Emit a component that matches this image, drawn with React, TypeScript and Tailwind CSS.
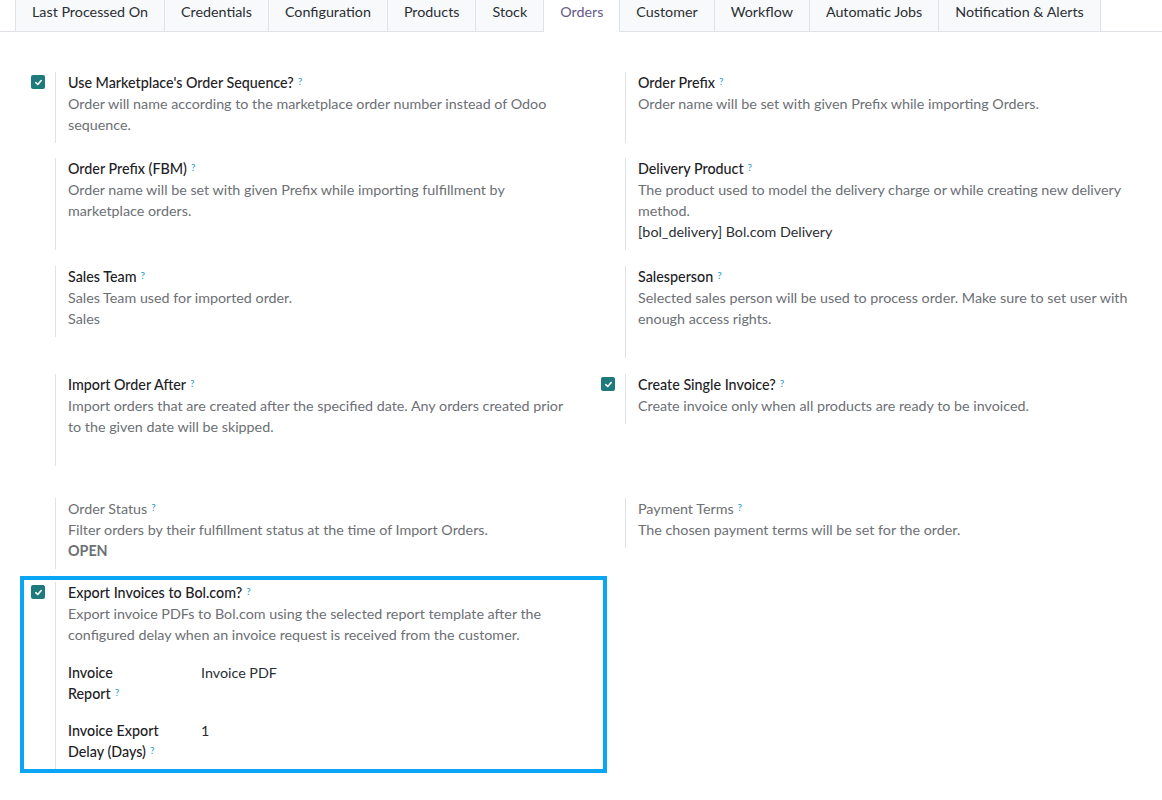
import React from "react";

const tabs = [
  "Last Processed On",
  "Credentials",
  "Configuration",
  "Products",
  "Stock",
  "Orders",
  "Customer",
  "Workflow",
  "Automatic Jobs",
  "Notification & Alerts",
];

function Help() {
  return (
    <sup className="ml-[4px] text-[10px] font-normal text-[#1f9bd0] relative -top-[3px]">?</sup>
  );
}

function Check() {
  return (
    <span className="flex h-[14px] w-[14px] items-center justify-center rounded-[2px] bg-[#1f7a7d]">
      <svg width="9" height="9" viewBox="0 0 10 10" fill="none">
        <path d="M2 5.2 L4.2 7.2 L8 2.8" stroke="white" strokeWidth="1.8" strokeLinecap="round" strokeLinejoin="round" />
      </svg>
    </span>
  );
}

type SettingProps = {
  checked?: boolean;
  title: string;
  muted?: boolean;
  desc: React.ReactNode;
  children?: React.ReactNode;
  empty?: boolean;
};

function Setting({ checked, title, muted, desc, children, empty }: SettingProps) {
  return (
    <div className="flex">
      <div className="w-[39px] shrink-0 pl-[15px] pt-[3px]">{checked ? <Check /> : null}</div>
      <div className="flex-1 border-l border-[#dee2e6] pl-3 pr-4 pb-2">
        <div className={muted ? "text-[#6c7075]" : "font-medium text-[#1d2125]"}>
          {title}
          <Help />
        </div>
        <div className="text-[#6c7075]">{desc}</div>
        {children}
        {empty ? <div className="h-[21px]" /> : null}
      </div>
    </div>
  );
}

export default function App() {
  return (
    <div className="min-h-screen bg-white text-[14.3px] leading-[21px] text-[#212529] font-['Lato','Noto_Sans',sans-serif]">
      {/* notebook tabs */}
      <div className="flex border-b border-[#dee2e6] pl-[15px]">
        {tabs.map((t, i) => {
          const active = t === "Orders";
          return (
            <div
              key={t}
              className={
                "-mb-px border-b border-r px-4 pt-[1px] pb-[9px] whitespace-nowrap " +
                (i === 0 ? "border-l border-l-[#dee2e6] " : "") +
                (active
                  ? "border-r-[#dee2e6] border-b-white bg-white text-[#66598a]"
                  : "border-r-[#dee2e6] border-b-[#dee2e6] bg-[#f8f9fa] text-[#2a2e33]")
              }
            >
              {t}
            </div>
          );
        })}
      </div>

      {/* settings */}
      <div className="px-4 pt-[40px]">
        <div className="grid w-[1140px] grid-cols-2 items-start">
          <Setting checked title="Use Marketplace's Order Sequence?" desc="Order will name according to the marketplace order number instead of Odoo sequence." />
          <Setting title="Order Prefix" desc="Order name will be set with given Prefix while importing Orders." empty />
        </div>

        <div className="mt-[15px] grid w-[1140px] grid-cols-2 items-start">
          <Setting title="Order Prefix (FBM)" desc="Order name will be set with given Prefix while importing fulfillment by marketplace orders." empty />
          <Setting title="Delivery Product" desc="The product used to model the delivery charge or while creating new delivery method.">
            <div className="text-[#2a2e33]">[bol_delivery] Bol.com Delivery</div>
          </Setting>
        </div>

        <div className="mt-[16px] grid w-[1140px] grid-cols-2 items-start">
          <Setting title="Sales Team" desc="Sales Team used for imported order.">
            <div className="text-[#6c7075]">Sales</div>
          </Setting>
          <Setting title="Salesperson" desc="Selected sales person will be used to process order. Make sure to set user with enough access rights." empty />
        </div>

        <div className="mt-[16px] grid w-[1140px] grid-cols-2 items-start">
          <Setting title="Import Order After" desc="Import orders that are created after the specified date. Any orders created prior to the given date will be skipped." empty />
          <Setting checked title="Create Single Invoice?" desc="Create invoice only when all products are ready to be invoiced." />
        </div>

        <div className="mt-[32px] grid w-[1140px] grid-cols-2 items-start">
          <Setting muted title="Order Status" desc="Filter orders by their fulfillment status at the time of Import Orders.">
            <div className="font-bold text-[#6c7075]">OPEN</div>
          </Setting>
          <Setting muted title="Payment Terms" desc="The chosen payment terms will be set for the order." />
        </div>

        <div className="mt-[13px] grid w-[1140px] grid-cols-2 items-start">
          <div className="relative">
            <Setting checked title="Export Invoices to Bol.com?" desc="Export invoice PDFs to Bol.com using the selected report template after the configured delay when an invoice request is received from the customer.">
              <div className="mt-[17px] flex">
                <div className="w-[133px] shrink-0 font-medium text-[#1d2125]">
                  Invoice
                  <br />
                  Report
                  <Help />
                </div>
                <div className="text-[#2a2e33]">Invoice PDF</div>
              </div>
              <div className="mt-[16px] flex">
                <div className="w-[133px] shrink-0 font-medium text-[#1d2125]">
                  Invoice Export
                  <br />
                  Delay (Days)
                  <Help />
                </div>
                <div className="text-[#2a2e33]">1</div>
              </div>
            </Setting>
            {/* highlight frame around the invoice export setting */}
            <div className="pointer-events-none absolute left-[4px] -top-[6px] h-[197px] w-[587px] border-4 border-[#0aa5f5]" />
          </div>
          <div />
        </div>
      </div>
    </div>
  );
}
